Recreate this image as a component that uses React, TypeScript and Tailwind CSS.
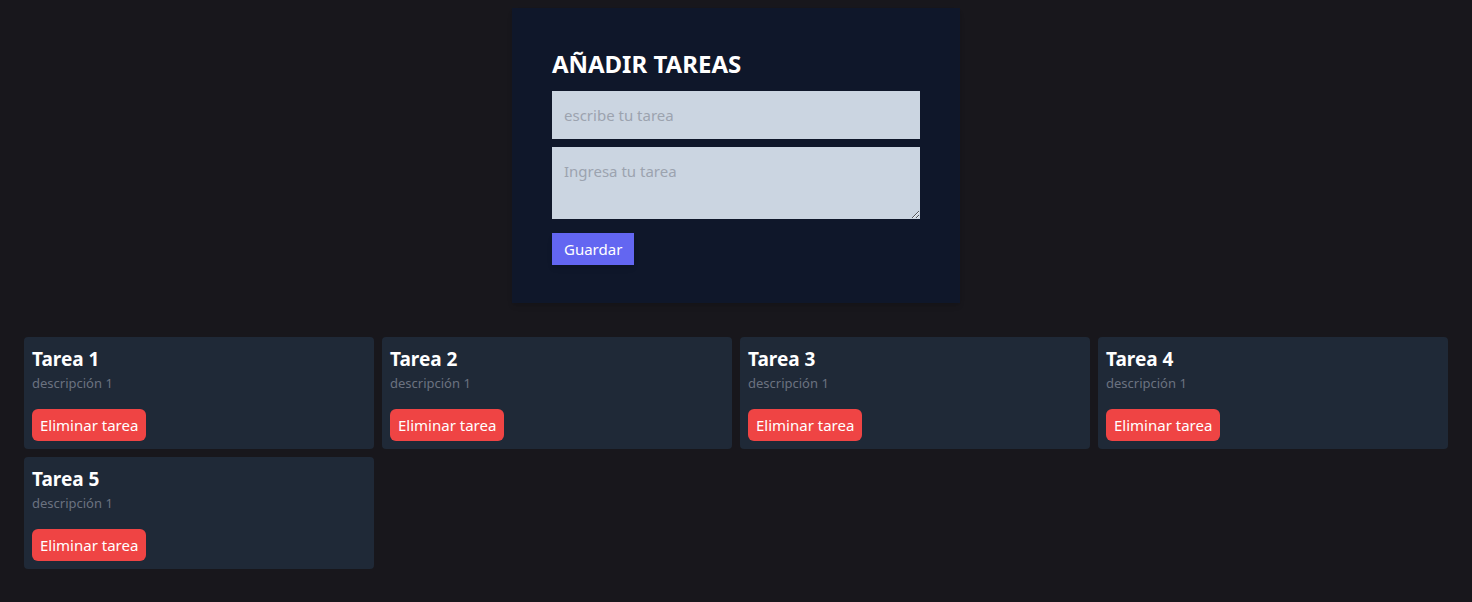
import React from "react";

const tasks = [1, 2, 3, 4, 5];

export default function App() {
  return (
    <div className="min-h-screen bg-[#18171c] font-['Noto_Sans',sans-serif] text-white">
      <div className="flex justify-center pt-2">
        <form className="w-[448px] bg-[#0f172a] px-10 pt-10 pb-[38px] shadow-md" onSubmit={(e) => e.preventDefault()}>
          <h1 className="mb-[11px] text-2xl font-bold leading-8">AÑADIR TAREAS</h1>
          <input
            placeholder="escribe tu tarea"
            className="mb-2 block h-12 w-full bg-[#cbd5e1] p-3 text-[15px] text-black outline-none placeholder:text-[#9ca3af]"
          />
          <textarea
            placeholder="Ingresa tu tarea"
            rows={2}
            className="mb-[14px] block h-[72px] w-full bg-[#cbd5e1] p-3 text-[15px] leading-6 text-black outline-none placeholder:text-[#9ca3af]"
          />
          <button className="block h-8 bg-[#6366f1] px-3 text-[15px] text-white shadow-md">Guardar</button>
        </form>
      </div>
      <div className="mt-[34px] grid grid-cols-4 gap-2 px-6">
        {tasks.map((t) => (
          <div key={t} className="rounded-sm bg-[#1f2937] p-2">
            <h2 className="text-[19px] font-bold leading-7">Tarea {t}</h2>
            <p className="text-[13px] leading-5 text-[#6b7280]">descripción 1</p>
            <button className="mt-4 h-8 rounded-md bg-[#ef4444] px-2 text-[15px] text-white">Eliminar tarea</button>
          </div>
        ))}
      </div>
    </div>
  );
}
